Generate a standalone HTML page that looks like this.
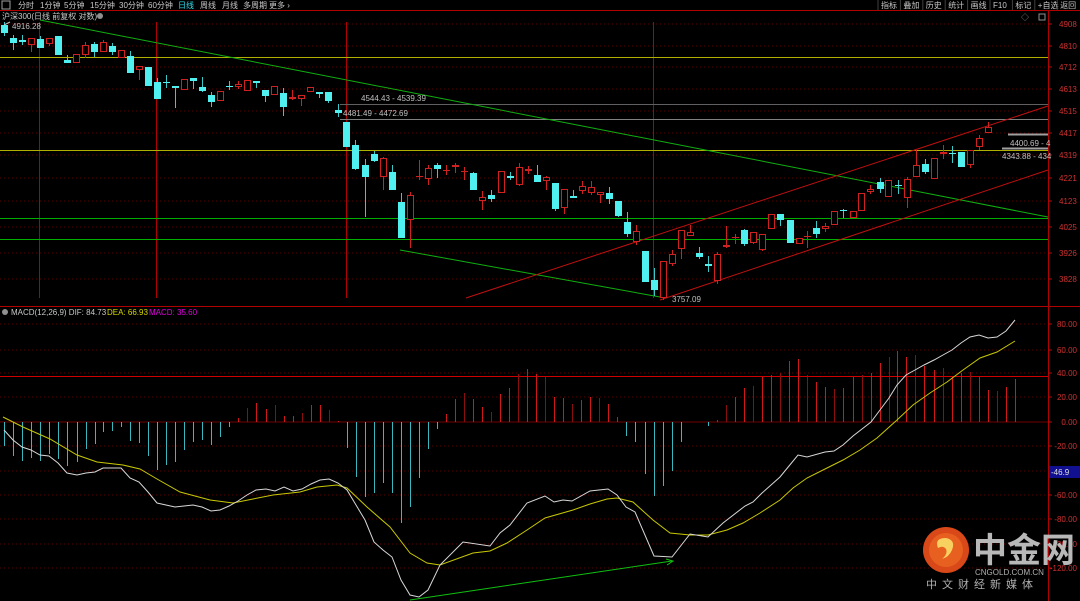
<!DOCTYPE html>
<html><head><meta charset="utf-8"><style>
html,body{margin:0;padding:0;background:#000;width:1080px;height:601px;overflow:hidden}
svg{display:block}
text{font-family:"Liberation Sans","Noto Sans CJK SC",sans-serif}
</style></head><body>
<svg id="s" width="1080" height="601" viewBox="0 0 1080 601" xmlns="http://www.w3.org/2000/svg">
<rect width="1080" height="601" fill="#000"/>
<g id="grid"></g>
<g id="lines"></g>
<g id="candles"></g>
<g id="macd"></g>
<g id="ui"></g>
</svg>
<script>
const NS="http://www.w3.org/2000/svg";
function el(p,tag,a,txt){const e=document.createElementNS(NS,tag);for(const k in a)e.setAttribute(k,a[k]);if(txt!=null)e.textContent=txt;document.getElementById(p).appendChild(e);return e;}
function line(p,x1,y1,x2,y2,c,w,extra){const a={x1,y1,x2,y2,stroke:c,'stroke-width':w||1};Object.assign(a,extra||{});return el(p,'line',a);}
// grid: price
const pl=[[24,'4908'],[46,'4810'],[67,'4712'],[89,'4613'],[111,'4515'],[133,'4417'],[155,'4319'],[178,'4221'],[201,'4123'],[227,'4025'],[253,'3926'],[279,'3828']];
pl.forEach(([y,t])=>{line('grid',0,y,1048,y,'#5a0000',1,{'stroke-dasharray':'1,3'});el('ui','text',{x:1059,y:y+3,fill:'#d03030','font-size':8},t);line('ui',1048,y,1052,y,'#c00000',1);});
const ml=[[324,'80.00'],[350,'60.00'],[373,'40.00'],[397,'20.00'],[422,'0.00'],[446,'-20.00'],[495,'-60.00'],[519,'-80.00'],[544,'-100.00'],[568,'-120.00']];
ml.forEach(([y,t])=>{line('grid',0,y,1048,y,'#5a0000',1,{'stroke-dasharray':'1,3'});el('ui','text',{x:1077,y:y+3,fill:'#d03030','font-size':8,'text-anchor':'end'},t);line('ui',1048,y,1052,y,'#c00000',1);});
line('grid',0,471,1048,471,'#5a0000',1,{'stroke-dasharray':'1,3'});
line('grid',0,422,1048,422,'#700000',1);
// frame lines
line('lines',0,10.5,1080,10.5,'#b00000',1);
line('lines',0,306.5,1080,306.5,'#b00000',1);
line('lines',1048.5,10,1048.5,601,'#b00000',1);
// verticals
[39,156,346,653].forEach(x=>line('lines',x+.5,22,x+.5,298,'#b00000',1));
// horizontals
line('lines',0,57.5,1048,57.5,'#b0b000',1);
line('lines',0,150.5,1048,150.5,'#b0b000',1);
line('lines',0,218.5,1048,218.5,'#00b000',1);
line('lines',0,239.5,1048,239.5,'#00b000',1);
line('lines',340,104.5,1048,104.5,'#606060',1);
line('lines',340,119.5,1048,119.5,'#808080',1);
line('lines',1008,134.5,1048,134.5,'#a0a0a0',2);
line('lines',1002,148.5,1048,148.5,'#a0a0a0',2);
line('lines',0,376.5,1048,376.5,'#d00000',1);
// trend lines
line('lines',40,20,1048,217,'#10b010',1);
line('lines',400,250,660,297,'#10b010',1);
line('lines',466,298,1048,106,'#c01010',1);
line('lines',660,300,1048,170,'#c01010',1);
line('lines',410,600,672,561,'#10c010',1);
el('lines','path',{d:'M666,559 L673,561 L667,565',stroke:'#10c010',fill:'none'});
// candles: x, top, bot, wickTop, wickBot, color(r/c)
const C=[
[4,25,33,22,36,'c'],[13,38,43,35,50,'c'],[22,40,42,35,45,'c'],[31,38,45,38,52,'r'],[40,39,48,36,48,'c'],[49,38,44,38,46,'r'],[58,36,55,36,55,'c'],[67,60,63,55,63,'c'],[76,54,63,54,63,'r'],[85,45,55,42,58,'r'],[94,44,52,42,57,'c'],[103,42,52,40,52,'r'],[112,46,52,43,55,'c'],[121,50,58,50,58,'r'],[130,56,73,51,73,'c'],[139,66,70,66,80,'r'],[148,67,86,67,86,'c'],[157,82,99,78,99,'c'],[166,82,83,75,88,'c'],[175,86,88,86,108,'c'],[184,79,90,79,90,'r'],[193,78,81,78,89,'c'],[202,87,91,77,92,'c'],[211,95,102,92,107,'c'],[220,91,101,91,101,'r'],[229,86,87,81,90,'c'],[238,84,87,81,89,'r'],[247,80,91,80,91,'r'],[256,81,83,81,88,'c'],[265,90,96,90,102,'c'],[274,86,95,86,95,'r'],[283,93,107,88,116,'c'],[292,97,99,90,100,'r'],[301,95,99,95,106,'r'],[310,87,92,87,92,'r'],[319,92,94,92,98,'c'],[328,92,101,92,103,'c'],[338,110,113,104,117,'c'],[346,122,147,122,147,'c'],
[355,145,169,140,170,'c'],[365,165,177,159,217,'c'],[374,154,161,151,162,'c'],[383,158,177,157,190,'r'],[392,172,190,165,190,'c'],[401,202,238,193,238,'c'],[410,195,220,192,248,'r'],[419,176,177,160,180,'r'],[428,168,179,165,185,'r'],[437,165,169,163,178,'c'],[446,170,171,165,175,'r'],[455,165,167,163,173,'r'],[464,171,172,167,180,'r'],[473,173,190,172,190,'c'],[482,197,201,191,210,'r'],[491,195,199,190,202,'c'],[501,171,193,171,193,'r'],[510,176,178,172,180,'c'],[519,167,185,163,186,'r'],[528,169,171,166,174,'r'],[537,175,182,165,182,'c'],[546,177,181,176,190,'r'],[555,183,209,183,211,'c'],[564,189,208,189,214,'r'],[573,196,198,190,198,'c'],[582,186,191,181,194,'r'],[591,187,193,181,195,'r'],[600,192,195,192,203,'r'],[609,193,199,187,204,'c'],[618,201,216,201,217,'c'],[627,222,234,212,237,'c'],[636,231,242,225,245,'r'],[645,251,282,251,282,'c'],[654,280,290,268,296,'c'],
[663,261,298,261,300,'r'],[672,254,264,250,266,'r'],[681,230,249,230,259,'r'],[690,232,236,225,236,'r'],[699,253,257,247,259,'c'],[708,264,266,256,272,'c'],[717,254,281,252,284,'r'],[726,245,247,226,248,'r'],[735,237,238,234,244,'r'],[744,230,244,229,246,'c'],[753,232,243,232,244,'r'],[762,234,250,234,251,'r'],[771,214,229,214,229,'r'],[780,214,220,214,226,'c'],[790,220,243,220,243,'c'],[799,238,244,238,244,'r'],[807,236,237,231,248,'r'],[816,228,234,221,238,'c'],[825,226,229,223,232,'r'],[834,211,225,211,225,'r'],[843,210,211,209,218,'c'],[853,211,218,211,218,'r'],[861,193,211,193,211,'r'],[870,189,192,185,194,'r'],[880,182,189,178,193,'c'],[888,180,197,180,197,'r'],[898,185,186,180,194,'c'],[907,179,198,177,208,'r'],[916,165,177,150,177,'r'],[925,164,172,159,174,'c'],[934,158,179,158,179,'r'],[943,152,154,145,159,'r'],[952,153,154,146,163,'c'],[961,152,167,152,167,'c'],[970,150,165,150,168,'r'],[979,138,147,135,150,'r'],[988,127,133,122,133,'r']];
C.forEach(([x,t,b,wt,wb,c])=>{
 const col=c=='r'?'#d02020':'#50f0f0';
 line('candles',x+.5,wt,x+.5,wb,c=='r'?'#d02020':'#3cc8c8',1);
 if(b-t<2){line('candles',x-3,t+.5,x+4,t+.5,col,1);}
 else if(c=='r') el('candles','rect',{x:x-2.5,y:t+.5,width:6,height:b-t-1,fill:'#000',stroke:col,'stroke-width':1});
 else el('candles','rect',{x:x-3,y:t,width:7,height:b-t,fill:col});
});
// MACD histogram
const H=[[4,446],[13,456],[22,461],[31,458],[40,461],[49,454],[58,459],[67,466],[77,462],[86,449],[95,444],[103,432],[112,431],[121,427],[130,441],[139,443],[148,456],[157,470],[166,465],[175,462],[184,450],[193,442],[202,440],[211,445],[220,437],[229,427],[238,418],[247,408],[256,403],[266,409],[275,405],[284,416],[293,416],[302,413],[311,405],[320,405],[329,410],[338,421],[347,448],[356,477],[365,497],[374,493],[383,483],[392,493],[401,523],[410,507],[419,478],[428,449],[437,429],[446,414],[455,399],
[464,393],[473,399],[482,407],[491,412],[500,394],[509,388],[518,374],[527,369],[536,374],[545,376],[554,397],[563,398],[572,404],[581,400],[590,397],[599,398],[608,404],[617,417],[626,436],[635,442],[645,474],[654,496],[663,486],[672,471],[681,442],[708,426],[717,420],[726,405],[735,397],[744,388],[753,386],[762,377],[771,375],[780,373],[789,361],[798,359],[807,375],[816,382],[825,387],[834,389],[843,388],[853,377],[862,375],[871,373],[880,363],[889,357],[897,351],[906,357],[915,355],[924,366],[934,370],[943,368],[952,377],[961,373],[970,372],[979,377],[988,390],[997,391],[1006,387],[1015,379]];
H.forEach(([x,y],i)=>{
 if(y>422) line('macd',x+.5,422,x+.5,y,'#3ab8c0',1);
 else line('macd',x+.5,y,x+.5,422,(i%3==0)?'#8a1010':'#d01818',1);
});
const dif=[[4,430],[13,440],[22,447],[31,450],[40,455],[49,456],[58,463],[67,473],[77,475],[86,473],[95,472],[103,468],[112,468],[121,468],[130,478],[139,482],[148,492],[157,503],[166,505],[175,507],[184,506],[193,505],[202,507],[211,511],[220,510],[229,506],[238,501],[247,495],[256,490],[266,489],[275,491],[284,487],[293,491],[302,489],[311,484],[320,480],[329,479],[338,483],[347,490],[356,505],[365,520],[374,542],[383,550],[392,557],[401,580],[410,595],[419,597],[428,590],[440,565],[463,542],[490,546],[500,533],[510,525],[527,503],[545,496],[554,502],[563,500],[572,501],[590,491],[608,489],[617,495],[626,507],[635,512],[654,556],[672,557],[690,534],[708,537],[723,523],[745,506],[753,502],[762,493],[780,477],[789,466],[798,455],[807,457],[825,452],[834,451],[843,445],[853,436],[862,429],[871,422],[880,410],[889,398],[897,385],[906,375],[915,370],[924,365],[934,360],[943,355],[952,350],[961,343],[970,337],[979,335],[988,338],[997,337],[1006,331],[1015,320]];
const dea=[[3,417],[23,427],[50,439],[77,455],[97,462],[123,465],[140,469],[157,479],[180,492],[210,500],[233,503],[253,499],[273,495],[300,492],[317,487],[337,485],[347,488],[367,507],[390,527],[410,553],[427,563],[440,565],[473,553],[490,551],[507,543],[527,530],[545,518],[573,510],[590,504],[607,499],[617,498],[633,502],[653,520],[670,533],[690,535],[708,535],[727,530],[743,523],[760,513],[780,500],[793,488],[807,478],[827,468],[843,460],[860,450],[877,438],[897,420],[913,405],[930,393],[947,382],[963,370],[980,358],[997,352],[1015,341]];
el('macd','polyline',{points:dea.map(p=>p.join(',')).join(' '),fill:'none',stroke:'#c8c800','stroke-width':1});
el('macd','polyline',{points:dif.map(p=>p.join(',')).join(' '),fill:'none',stroke:'#d8d8d8','stroke-width':1});
// labels
const g='#c0c0c0';
el('ui','text',{x:12,y:29,fill:g,'font-size':8},'4916.28');
line('ui',4,25,10,22,'#c0c0c0',1);
el('ui','text',{x:361,y:101,fill:g,'font-size':8},'4544.43 - 4539.39');
el('ui','text',{x:343,y:116,fill:g,'font-size':8},'4481.49 - 4472.69');
el('ui','text',{x:672,y:302,fill:g,'font-size':8},'3757.09');
el('ui','text',{x:1010,y:146,fill:g,'font-size':8},'4400.69 - 4');
el('ui','text',{x:1002,y:159,fill:g,'font-size':8},'4343.88 - 434');
// -46.9 box
el('ui','rect',{x:1049,y:466,width:31,height:12,fill:'#101090'});
el('ui','text',{x:1051,y:475,fill:'#e0e0e0','font-size':8},'-46.9');
// toolbar
el('ui','rect',{x:2,y:1,width:8,height:8,fill:'none',stroke:'#a0a0a0','stroke-width':1});
const tb=[[18,'分时'],[40,'1分钟'],[64,'5分钟'],[90,'15分钟'],[119,'30分钟'],[148,'60分钟'],[178,'日线'],[200,'周线'],[222,'月线'],[243,'多周期'],[269,'更多 ›']];
tb.forEach(([x,t])=>el('ui','text',{x,y:8,fill:t=='日线'?'#30e0f0':'#c8c8c8','font-size':8},t));
const rb=['指标','叠加','历史','统计','画线','F10','标记','+自选','返回'];
rb.forEach((t,i)=>{const x=878+i*22.4;line('ui',x,0,x,10,'#404040',1);el('ui','text',{x:x+3,y:8,fill:'#c8c8c8','font-size':8},t);});
el('ui','text',{x:2,y:19,fill:'#c8c8c8','font-size':8},'沪深300(日线 前复权 对数)');
el('ui','circle',{cx:100,cy:16,r:3,fill:'#909090'});
el('ui','text',{x:1021,y:20,fill:'#909090','font-size':8},'◇');
el('ui','rect',{x:1039,y:14,width:6,height:6,fill:'none',stroke:'#909090'});
el('ui','circle',{cx:5,cy:312,r:3,fill:'#909090'});
el('ui','text',{x:11,y:315,fill:'#c8c8c8','font-size':8},'MACD(12,26,9)  DIF: 84.73');
el('ui','text',{x:107,y:315,fill:'#d8d800','font-size':8},'DEA: 66.93');
el('ui','text',{x:149,y:315,fill:'#e000e0','font-size':8},'MACD: 35.60');
// logo
el('ui','circle',{cx:946,cy:550,r:23,fill:'#d84818'});
el('ui','circle',{cx:946,cy:550,r:17,fill:'#e86020'});
el('ui','path',{d:'M938,548 q-4,-10 8,-10 q10,2 6,12 q-3,7 -10,9 q6,-5 4,-10 q-3,-4 -8,-1 z',fill:'#f8d060'});
el('ui','text',{x:973,y:562,fill:'#b8b8b8','font-size':34,'font-weight':'bold'},'中金网');
el('ui','text',{x:975,y:575,fill:'#b0b0b0','font-size':8},'CNGOLD.COM.CN');
el('ui','text',{x:926,y:588,fill:'#b0b0b0','font-size':11,'letter-spacing':'5'},'中文财经新媒体');
</script>
</body></html>
